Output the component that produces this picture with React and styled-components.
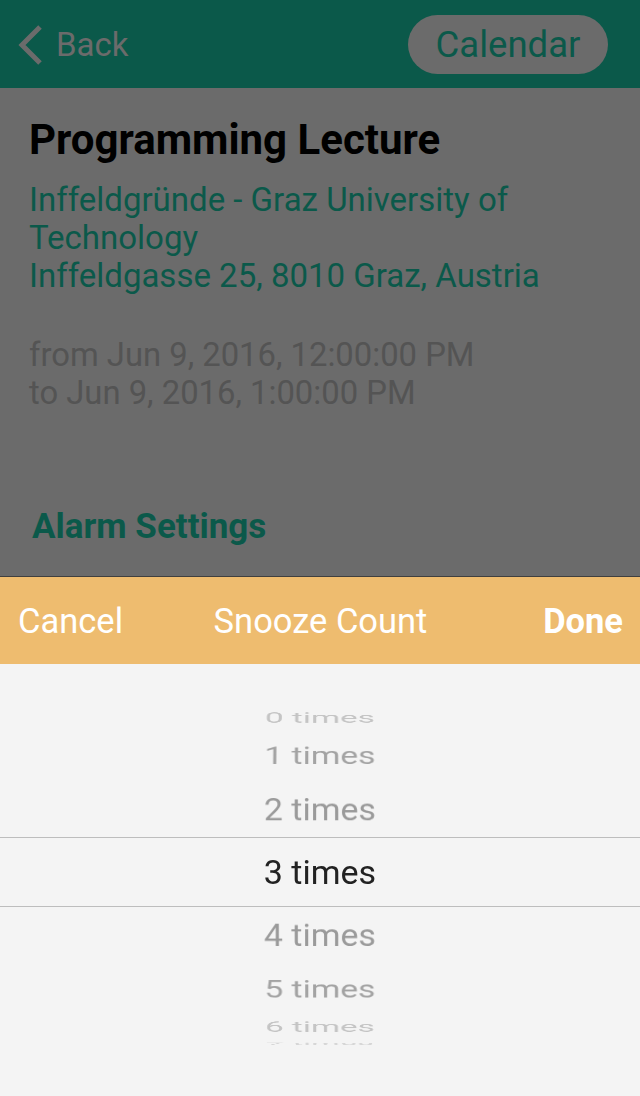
import React from "react";
import styled, { createGlobalStyle } from "styled-components";

const Global = createGlobalStyle`
  html, body { margin: 0; padding: 0; background: #6b6b6b; }
  body { font-family: Roboto, "Liberation Sans", sans-serif; }
  #root { width: 640px; height: 1096px; overflow: hidden; }
`;

const Page = styled.div`
  width: 640px;
  height: 1096px;
  display: flex;
  flex-direction: column;
  background: #6b6b6b;
`;

const NavBar = styled.header`
  height: 88px;
  flex: none;
  background: #0b594a;
  display: flex;
  align-items: center;
  justify-content: space-between;
  padding: 0 32px 0 16px;
  box-sizing: border-box;
`;

const BackButton = styled.div`
  display: flex;
  align-items: center;
  gap: 12px;
  color: #6b6b6b;
  font-size: 33px;
  margin-top: 1px;
`;

const Pill = styled.div`
  width: 200px;
  height: 59px;
  border-radius: 30px;
  background: #6b6b6b;
  color: #0b594a;
  font-size: 36.5px;
  display: flex;
  align-items: center;
  justify-content: center;
  margin-top: 1px;
`;

const Details = styled.section`
  flex: none;
  height: 488px;
  padding: 30px 0 0 29px;
  box-sizing: border-box;
  display: flex;
  flex-direction: column;
`;

const Title = styled.h1`
  margin: 0;
  font-size: 42px;
  font-weight: 700;
  color: #000;
  line-height: 44px;
`;

const Address = styled.div`
  margin-top: 19px;
  color: #0b594a;
  font-size: 33px;
  line-height: 38px;
`;

const Dates = styled.div`
  margin-top: 41px;
  color: #545454;
  font-size: 32.8px;
  line-height: 38px;
`;

const SectionLink = styled.div`
  margin-top: 95px;
  margin-left: 3px;
  color: #0b594a;
  font-size: 35px;
  font-weight: 700;
  line-height: 40px;
`;

const Sheet = styled.div`
  flex: 1;
  display: flex;
  flex-direction: column;
  border-top: 1px solid #3f3f3f;
`;

const Toolbar = styled.div`
  height: 87px;
  flex: none;
  background: #eebc6f;
  display: grid;
  grid-template-columns: 1fr auto 1fr;
  align-items: center;
  padding: 0 17px 0 18px;
  color: #fff;
  font-size: 34.5px;
`;

const ToolText = styled.span`
  font-weight: ${(p) => (p.$bold ? 700 : 400)};
  text-align: ${(p) => p.$align || "left"};
`;

const PickerArea = styled.div`
  flex: 1;
  background: #f4f4f4;
  padding-top: 33px;
  box-sizing: border-box;
`;

const Wheel = styled.div`
  position: relative;
  height: 352px;
  overflow: hidden;
  perspective: 4000px;
`;

const Cylinder = styled.div`
  position: absolute;
  inset: 0;
  transform-style: preserve-3d;
  transform: translateZ(-180px);
`;

const Item = styled.div`
  position: absolute;
  left: 0;
  right: 0;
  top: 143px;
  height: 64px;
  line-height: 64px;
  text-align: center;
  font-size: 34px;
  backface-visibility: hidden;
  color: ${(p) => p.$color};
`;

const Band = styled.div`
  position: absolute;
  left: 0;
  right: 0;
  top: 140px;
  height: 68px;
  border-top: 1px solid #bdbdbd;
  border-bottom: 1px solid #bdbdbd;
  pointer-events: none;
`;

const colors = ["#222", "#9a9a9a", "#a3a3a3", "#c4c4c4", "#d6d6d6"];
const STEP = 20.5;

export default function App() {
  const selected = 3;
  const items = [0, 1, 2, 3, 4, 5, 6, 7];
  return (
    <Page>
      <Global />
      <NavBar>
        <BackButton>
          <svg width="28" height="44" viewBox="0 0 28 44">
            <polyline points="24,4 6,22 24,40" fill="none" stroke="#6b6b6b" strokeWidth="5" />
          </svg>
          Back
        </BackButton>
        <Pill>Calendar</Pill>
      </NavBar>
      <Details>
        <Title>Programming Lecture</Title>
        <Address>
          Inffeldgründe - Graz University of
          <br />
          Technology
          <br />
          Inffeldgasse 25, 8010 Graz, Austria
        </Address>
        <Dates>
          from Jun 9, 2016, 12:00:00 PM
          <br />
          to Jun 9, 2016, 1:00:00 PM
        </Dates>
        <SectionLink>Alarm Settings</SectionLink>
      </Details>
      <Sheet>
        <Toolbar>
          <ToolText>Cancel</ToolText>
          <ToolText $align="center">Snooze Count</ToolText>
          <ToolText $bold $align="right">Done</ToolText>
        </Toolbar>
        <PickerArea>
          <Wheel>
            <Cylinder>
              {items.map((n) => {
                const d = n - selected;
                return (
                  <Item
                    key={n}
                    $color={colors[Math.min(Math.abs(d), 4)]}
                    style={{ transform: `rotateX(${-d * STEP}deg) translateZ(180px)` }}
                  >
                    {n} times
                  </Item>
                );
              })}
            </Cylinder>
            <Band />
          </Wheel>
        </PickerArea>
      </Sheet>
    </Page>
  );
}
